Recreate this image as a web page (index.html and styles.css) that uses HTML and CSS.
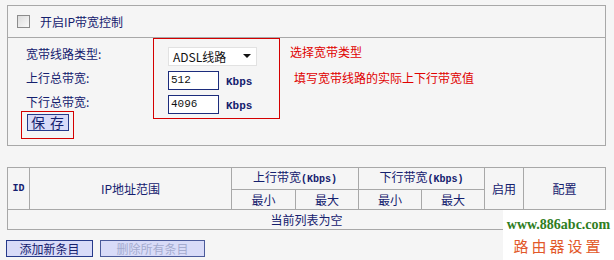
FILE: index.html
```html
<!DOCTYPE html>
<html lang="zh-CN">
<head>
    <meta charset="UTF-8">
    <title>IP带宽控制</title>
    <link rel="stylesheet" href="styles.css">
</head>
<body>
    <div class="panel">
        <div class="panel-head">
            <label class="check"><span class="box"></span>开启IP带宽控制</label>
        </div>
        <div class="panel-body">
            <div class="labels">
                <div class="row">宽带线路类型:</div>
                <div class="row">上行总带宽:</div>
                <div class="row">下行总带宽:</div>
                <div class="save-mark">
                    <button class="btn save">保 存</button>
                </div>
            </div>
            <div class="mark">
                <div class="row">
                    <div class="select">ADSL线路<span class="arrow"></span></div>
                </div>
                <div class="row">
                    <input class="field" type="text" value="512"><span class="unit">Kbps</span>
                </div>
                <div class="row">
                    <input class="field" type="text" value="4096"><span class="unit">Kbps</span>
                </div>
            </div>
            <div class="hints">
                <div class="hint">选择宽带类型</div>
                <div class="hint second">填写宽带线路的实际上下行带宽值</div>
            </div>
        </div>
    </div>

    <table class="rules">
        <colgroup>
            <col style="width:22px">
            <col style="width:202px">
            <col style="width:64px">
            <col style="width:63px">
            <col style="width:63px">
            <col style="width:63px">
            <col style="width:39px">
            <col style="width:82px">
        </colgroup>
        <tr>
            <th rowspan="2" class="latin">ID</th>
            <th rowspan="2">IP地址范围</th>
            <th colspan="2">上行带宽<span class="latin">(Kbps)</span></th>
            <th colspan="2">下行带宽<span class="latin">(Kbps)</span></th>
            <th rowspan="2">启用</th>
            <th rowspan="2">配置</th>
        </tr>
        <tr>
            <th>最小</th>
            <th>最大</th>
            <th>最小</th>
            <th>最大</th>
        </tr>
        <tr>
            <td colspan="8">当前列表为空</td>
        </tr>
    </table>

    <div class="actions">
        <button class="btn add">添加新条目</button>
        <button class="btn remove" disabled>删除所有条目</button>
    </div>

    <div class="stamp">
        <div class="site">www.886abc.com</div>
        <div class="brand">路由器设置</div>
    </div>
</body>
</html>
```

FILE: styles.css
```css
body {
    margin: 0;
    padding: 5px 0 0 7px;
    width: 607px;
    height: 255px;
    background-color: #f5f5f5;
    font-family: "Noto Sans CJK SC", sans-serif;
    font-size: 12px;
    color: #14206e;
    position: relative;
    overflow: hidden;
}
.panel {
    width: 599px;
    box-sizing: border-box;
    border: 1px solid #a8a8a8;
}
.panel-head {
    height: 31px;
    border-bottom: 1px solid #a8a8a8;
    display: flex;
    align-items: center;
}
.check {
    display: flex;
    align-items: center;
    font-size: 12px;
}
.check .box {
    width: 11px;
    height: 11px;
    margin: 0 10px 0 9px;
    border: 1px solid #8c8c8c;
    background: linear-gradient(135deg, #dcdcdc, #fafafa);
}
.panel-body {
    display: flex;
    align-items: flex-start;
    padding-bottom: 6px;
}
.labels {
    width: 132px;
    margin-left: 13px;
    padding-top: 4px;
}
.labels .row {
    height: 24px;
    line-height: 24px;
    padding-left: 5px;
}
.save-mark {
    margin-top: -3px;
    width: 53px;
    height: 28px;
    box-sizing: border-box;
    border: 1px solid #d40000;
    padding: 2px 0 0 5px;
}
.btn {
    height: 17px;
    padding: 0;
    border: 1px solid #263a8a;
    background-color: #d8dbf8;
    color: #14206e;
    font-family: "Noto Sans CJK SC", sans-serif;
    font-size: 12px;
    line-height: 15px;
    cursor: pointer;
}
.btn.save {
    width: 42px;
    font-size: 14px;
    letter-spacing: 1px;
}
.mark {
    width: 127px;
    height: 81px;
    box-sizing: border-box;
    border: 1px solid #d40000;
    border-top-width: 1px;
    padding: 5px 0 0 14px;
}
.mark .row {
    height: 24px;
    display: flex;
    align-items: center;
}
.select {
    width: 89px;
    height: 19px;
    box-sizing: border-box;
    border: 1px solid #e2e2e2;
    background-color: #fff;
    display: flex;
    align-items: center;
    justify-content: space-between;
    padding: 0 5px 0 4px;
    color: #111;
}
.arrow {
    width: 0;
    height: 0;
    border-left: 4px solid transparent;
    border-right: 4px solid transparent;
    border-top: 4px solid #111;
}
.field {
    width: 51px;
    height: 19px;
    box-sizing: border-box;
    border: 1px solid #1c2c7c;
    background-color: #fff;
    padding: 0 2px;
    font-family: "Liberation Mono", monospace;
    font-size: 11px;
    color: #111;
    outline: none;
}
.unit, .latin {
    font-family: "Liberation Mono", monospace;
    font-weight: bold;
    font-size: 11px;
}
.unit {
    margin-left: 7px;
    margin-top: 3px;
}
.hints {
    margin-left: 10px;
    padding-top: 2px;
    color: #e00000;
}
.hint {
    line-height: 24px;
}
.hint.second {
    margin-top: 2px;
    padding-left: 4px;
}
.rules {
    margin-top: 21px;
    width: 599px;
    table-layout: fixed;
    border-collapse: collapse;
}
.rules th, .rules td {
    border: 1px solid #a8a8a8;
    height: 19px;
    padding: 0;
    text-align: center;
    font-weight: normal;
    font-size: 12px;
    line-height: 18px;
}
.rules .latin {
    font-weight: bold;
    font-size: 10px;
}
.actions {
    margin: 10px 0 0 -1px;
    display: flex;
    gap: 7px;
}
.btn.add {
    width: 87px;
}
.btn.remove {
    width: 105px;
    color: #a4abcf;
    border-color: #4a5a9a;
    cursor: default;
}
.stamp {
    position: absolute;
    left: 503px;
    top: 210px;
    width: 111px;
    height: 50px;
    background-color: #fff;
    text-align: center;
}
.site {
    margin-top: 7px;
    font-family: "Liberation Serif", serif;
    font-weight: bold;
    font-size: 14px;
    color: #2f7d22;
    line-height: 16px;
}
.brand {
    margin-top: 3px;
    font-size: 15px;
    letter-spacing: 3px;
    color: #e2592a;
    line-height: 20px;
}
```
